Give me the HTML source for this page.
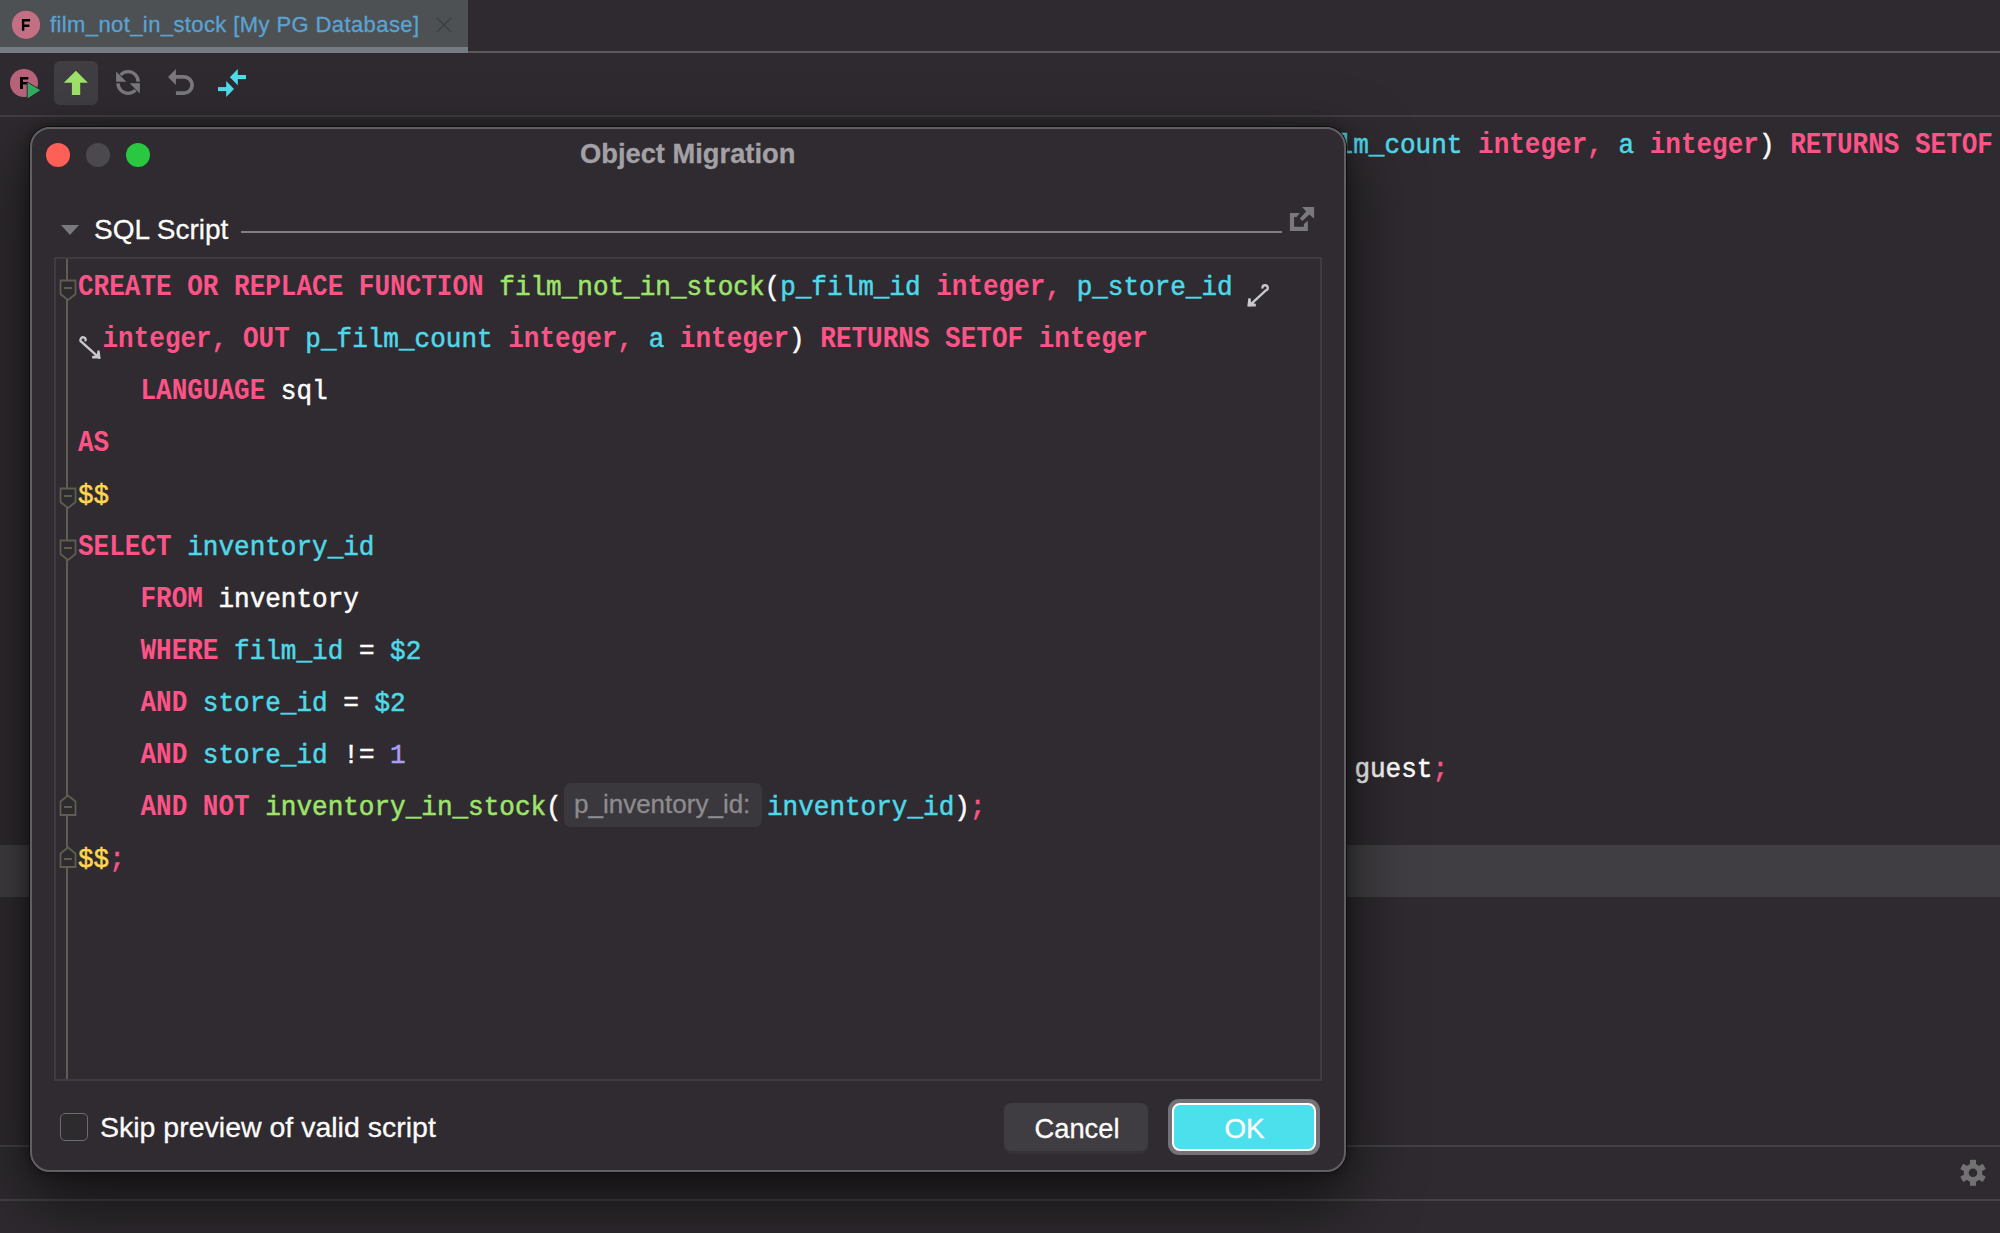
<!DOCTYPE html>
<html><head><meta charset="utf-8">
<style>
*{margin:0;padding:0;box-sizing:border-box}
html,body{width:2000px;height:1233px;overflow:hidden;background:#2e2a2f;font-family:"Liberation Sans",sans-serif}
.abs{position:absolute}
#tab{left:0;top:0;width:468px;height:52px;background:#4d5154}
#tabul{left:0;top:47px;width:468px;height:6px;background:#737b83}
#tabline{left:468px;top:51px;width:1532px;height:2px;background:#5a585b}
#tbline{left:0;top:115px;width:2000px;height:2px;background:#403e41}
.code{font-family:"Liberation Mono",monospace;font-size:26px;line-height:52px;white-space:pre;color:#fcfcfa;position:absolute;height:52px}
.code span,.code b{display:inline-block;transform-origin:0 33px;transform:scaleY(1.06);-webkit-text-stroke:0.5px currentColor}
.code .k{color:#fd5387;font-weight:bold;transform:scaleY(1.17);-webkit-text-stroke:0}
.f{color:#9ee36b}
.v{color:#4fd8e8}
.y{color:#fed650}
.n{color:#ab9df2}
.w{color:#fcfcfa}
.p{color:#fd5387}
#dialog{left:29px;top:126px;width:1318px;height:1047px;background:#2f2b30;border:1px solid #0e0d0f;border-radius:21px;box-shadow:0 28px 70px rgba(0,0,0,0.6),0 0 14px rgba(0,0,0,0.4)}
#dialogin{left:30px;top:127px;width:1316px;height:1045px;border:2px solid #625f64;border-radius:20px}
.ui{font-family:"Liberation Sans",sans-serif;white-space:pre;position:absolute;-webkit-text-stroke:0.3px currentColor}
</style></head><body>
<!-- tab bar -->
<div id="tab" class="abs"></div>
<div id="tabul" class="abs"></div>
<div id="tabline" class="abs"></div>
<svg class="abs" style="left:0;top:0" width="470" height="52">
  <circle cx="26" cy="24.8" r="14.1" fill="#c36f84"/>
  <path d="M21.9 19 L30.1 19 L30.1 21.4 L24.3 21.4 L24.3 24.6 L29.4 24.6 L29.4 26.9 L24.3 26.9 L24.3 30.8 L21.9 30.8 Z" fill="#000"/>
  <path d="M437 18 L451 32 M451 18 L437 32" stroke="#3e4144" stroke-width="1.6"/>
</svg>
<div class="ui" style="left:50px;top:10px;font-size:22px;line-height:30px;letter-spacing:0.4px;color:#5aa3d3">film_not_in_stock [My PG Database]</div>
<div id="tbline" class="abs"></div>
<!-- toolbar -->
<svg class="abs" style="left:0;top:0" width="260" height="115">
  <circle cx="24" cy="83" r="14" fill="#b8637a"/>
  <path d="M20 77 L28.3 77 L28.3 79.6 L23 79.6 L23 82 L27.3 82 L27.3 84.5 L23 84.5 L23 89 L20 89 Z" fill="#000"/>
  <path d="M27.8 83.1 L39.9 90.3 L27.8 98 Z" fill="#34ac63" stroke="#2d2a2e" stroke-width="2.2" paint-order="stroke"/>
  <path d="M27.8 83.1 L39.9 90.3 L27.8 98 Z" fill="#34ac63"/>
  <rect x="54" y="61" width="44" height="44" rx="6" fill="#403d43"/>
  <path d="M75.9 70.8 L87.9 82.8 L80.2 82.8 L80.2 95.1 L71.9 95.1 L71.9 82.8 L63.8 82.8 Z" fill="#9ee26a"/>
  <g fill="#7a787c">
    <path d="M139.9 81.75 A11.8 11.8 0 0 0 116.3 81.75 L119.7 81.75 A8.4 8.4 0 0 1 136.5 81.75 Z"/>
    <path d="M116.1 71.6 L116.1 81.75 L126.4 81.75 Z" stroke="#2d2a2e" stroke-width="1.5" paint-order="stroke"/>
    <path d="M116.3 83.25 A11.8 11.8 0 0 0 139.9 83.25 L136.5 83.25 A8.4 8.4 0 0 1 119.7 83.25 Z"/>
    <path d="M139.9 93.4 L139.9 83.25 L129.6 83.25 Z" stroke="#2d2a2e" stroke-width="1.5" paint-order="stroke"/>
    <path d="M168 77 L175.9 69 L175.9 85.1 Z"/>
    <path d="M175 75 L184 75 A10 10 0 0 1 184 95 L175.9 95 L175.9 91.2 L184 91.2 A6.2 6.2 0 0 0 184 78.8 L175 78.8 Z"/>
  </g>
  <g fill="#4fdde9">
    <path d="M229.9 77.2 L237.8 69 L237.8 85.3 Z"/>
    <rect x="237" y="75" width="9" height="4.1"/>
    <path d="M234 89 L226.2 81 L226.2 97.1 Z"/>
    <rect x="218" y="87.1" width="9" height="4"/>
  </g>
</svg>

<!-- background editor text -->
<div class="code" style="left:1322px;top:120px"><span class="v">ilm_count</span> <span class="k">integer</span><span class="p">,</span> <span class="v">a</span> <span class="k">integer</span><span class="w">)</span> <span class="k">RETURNS SETOF</span></div>
<div class="code" style="left:1292px;top:744px"><span class="w">    guest</span><span class="p">;</span></div>
<div class="abs" style="left:0;top:845px;width:2000px;height:52px;background:#403e42"></div>
<div class="abs" style="left:0;top:1145px;width:2000px;height:2px;background:#434145"></div>
<div class="abs" style="left:0;top:1199px;width:2000px;height:2px;background:#434145"></div>
<svg class="abs" style="left:1953px;top:1153px" width="40" height="40">
  <g transform="translate(20 19.8)" fill="#737174">
    <circle r="9.3"/>
    <rect x="-3" y="-13" width="6" height="6"/>
    <rect x="-3" y="-13" width="6" height="6" transform="rotate(60)"/>
    <rect x="-3" y="-13" width="6" height="6" transform="rotate(120)"/>
    <rect x="-3" y="-13" width="6" height="6" transform="rotate(180)"/>
    <rect x="-3" y="-13" width="6" height="6" transform="rotate(240)"/>
    <rect x="-3" y="-13" width="6" height="6" transform="rotate(300)"/>
    <circle r="4.3" fill="#2e2a2f"/>
  </g>
</svg>

<!-- dialog -->
<div id="dialog" class="abs"></div>
<div id="dialogin" class="abs"></div>
<svg class="abs" style="left:40px;top:140px" width="120" height="30">
  <circle cx="18" cy="15" r="12" fill="#fe5f57"/>
  <circle cx="58" cy="15" r="12" fill="#4b494d"/>
  <circle cx="98" cy="15" r="12" fill="#2ac840"/>
</svg>
<div class="ui" style="left:580px;top:138px;font-size:27.3px;line-height:32px;font-weight:bold;color:#a3a1a5">Object Migration</div>

<svg class="abs" style="left:55px;top:200px" width="30" height="50">
  <path d="M6 25 L24 25 L15 35 Z" fill="#7a787c"/>
</svg>
<div class="ui" style="left:94px;top:213px;font-size:28px;line-height:34px;color:#fcfcfa">SQL Script</div>
<div class="abs" style="left:241px;top:231px;width:1041px;height:2px;background:#807e82"></div>
<svg class="abs" style="left:0;top:0" width="1330" height="240">
  <path d="M1289.9 213 L1299.9 213 L1296.6 217 L1294.1 217 L1294.1 226.8 L1303.9 226.8 L1303.9 224.1 L1307.9 220.8 L1307.9 231 L1289.9 231 Z" fill="#7a787c"/>
  <path d="M1302.1 207.1 L1314.1 207.1 L1314.1 218.8 L1309.4 214.5 L1302.3 221 L1299.9 218.5 L1306.1 211.5 Z" fill="#7a787c"/>
</svg>

<!-- editor box -->
<div class="abs" style="left:54px;top:257px;width:1268px;height:824px;border:2px solid #3e3c40"></div>
<div class="abs" style="left:66px;top:259px;width:2px;height:820px;background:#5e5d50"></div>

<svg class="abs" style="left:54.5px;top:259px" width="30" height="820">
  <g fill="#2e2b2f" stroke="#5e5d50" stroke-width="1.8">
    <path d="M5.5 21.5 L20.5 21.5 L20.5 35 L13 41 L5.5 35 Z"/>
    <path d="M5.5 229.5 L20.5 229.5 L20.5 243 L13 249 L5.5 243 Z"/>
    <path d="M5.5 281.5 L20.5 281.5 L20.5 295 L13 301 L5.5 295 Z"/>
    <path d="M5.5 556 L20.5 556 L20.5 542.5 L13 536.5 L5.5 542.5 Z"/>
    <path d="M5.5 608 L20.5 608 L20.5 594.5 L13 588.5 L5.5 594.5 Z"/>
  </g>
  <g stroke="#5e5d50" stroke-width="1.8">
    <path d="M9 29 L17 29 M9 237 L17 237 M9 289 L17 289 M9 548 L17 548 M9 600 L17 600"/>
  </g>
</svg>

<!-- code -->
<div class="code" style="left:78px;top:262px"><span class="k">CREATE OR REPLACE FUNCTION</span> <span class="f">film_not_in_stock</span><span class="w">(</span><span class="v">p_film_id</span> <span class="k">integer</span><span class="p">,</span> <span class="v">p_store_id</span></div>
<div class="code" style="left:102.5px;top:314px"><span class="k">integer</span><span class="p">,</span> <span class="k">OUT</span> <span class="v">p_film_count</span> <span class="k">integer</span><span class="p">,</span> <span class="v">a</span> <span class="k">integer</span><span class="w">)</span> <span class="k">RETURNS SETOF integer</span></div>
<div class="code" style="left:78px;top:366px">    <span class="k">LANGUAGE</span> <span class="w">sql</span></div>
<div class="code" style="left:78px;top:418px"><span class="k">AS</span></div>
<div class="code" style="left:78px;top:470px"><span class="y">$$</span></div>
<div class="code" style="left:78px;top:522px"><span class="k">SELECT</span> <span class="v">inventory_id</span></div>
<div class="code" style="left:78px;top:574px">    <span class="k">FROM</span> <span class="w">inventory</span></div>
<div class="code" style="left:78px;top:626px">    <span class="k">WHERE</span> <span class="v">film_id</span> <span class="w">=</span> <span class="v">$2</span></div>
<div class="code" style="left:78px;top:678px">    <span class="k">AND</span> <span class="v">store_id</span> <span class="w">=</span> <span class="v">$2</span></div>
<div class="code" style="left:78px;top:730px">    <span class="k">AND</span> <span class="v">store_id</span> <span class="w">!=</span> <span class="n">1</span></div>
<div class="code" style="left:78px;top:782px">    <span class="k">AND NOT</span> <span class="f">inventory_in_stock</span><span class="w">(</span></div>
<div class="abs" style="left:564px;top:783px;width:198px;height:44px;background:#3a383c;border-radius:7px"></div>
<div class="ui" style="left:574px;top:788px;font-size:26px;line-height:32px;color:#8d8b8f">p_inventory_id:</div>
<div class="code" style="left:767px;top:782px"><span class="v">inventory_id</span><span class="w">)</span><span class="p">;</span></div>
<div class="code" style="left:78px;top:834px"><span class="y">$$</span><span class="p">;</span></div>

<!-- wrap icons -->
<svg class="abs" style="left:0;top:0" width="1300" height="380">
  <g fill="none" stroke="#c9c8ca" stroke-width="2.3" stroke-linecap="round">
    <path d="M1249.6 305.4 L1265.6 290.6 A2.7 2.7 0 1 0 1262.4 287.6"/>
    <path d="M99.3 357.8 L82 342.3 A2.6 2.6 0 1 1 85.6 340.3"/>
  </g>
  <g fill="#c9c8ca">
    <path d="M1247.3 306.5 L1248.3 298.2 L1250.6 298.3 L1251.2 302.7 L1255.8 303.8 L1255.8 306.5 Z"/>
    <path d="M100.6 358.6 L99.6 350.5 L97.4 350.5 L96.8 355.2 L92.1 356.1 L92.1 358.6 Z"/>
  </g>
</svg>
<!-- bottom -->
<div class="abs" style="left:60px;top:1113px;width:28px;height:28px;border:1.5px solid #6d6b6f;border-radius:5px;background:#2e2b2f"></div>
<div class="ui" style="left:100px;top:1110px;font-size:28.5px;line-height:34px;color:#fcfcfa">Skip preview of valid script</div>
<div class="abs" style="left:1004px;top:1103px;width:144px;height:48px;background:#403d42;border-radius:7px;box-shadow:0 3px 0 #333235"></div>
<div class="ui" style="left:1005px;top:1112.5px;width:144px;text-align:center;font-size:27.3px;line-height:32px;color:#fcfcfa">Cancel</div>
<div class="abs" style="left:1168px;top:1099px;width:152px;height:56px;background:#747276;border-radius:11px"></div>
<div class="abs" style="left:1172px;top:1103px;width:144px;height:48px;background:#4ce0ec;border:2.4px solid #ffffff;border-radius:8px"></div>
<div class="ui" style="left:1172px;top:1112.5px;width:145px;text-align:center;font-size:27.8px;line-height:32px;color:#ffffff">OK</div>
</body></html>
